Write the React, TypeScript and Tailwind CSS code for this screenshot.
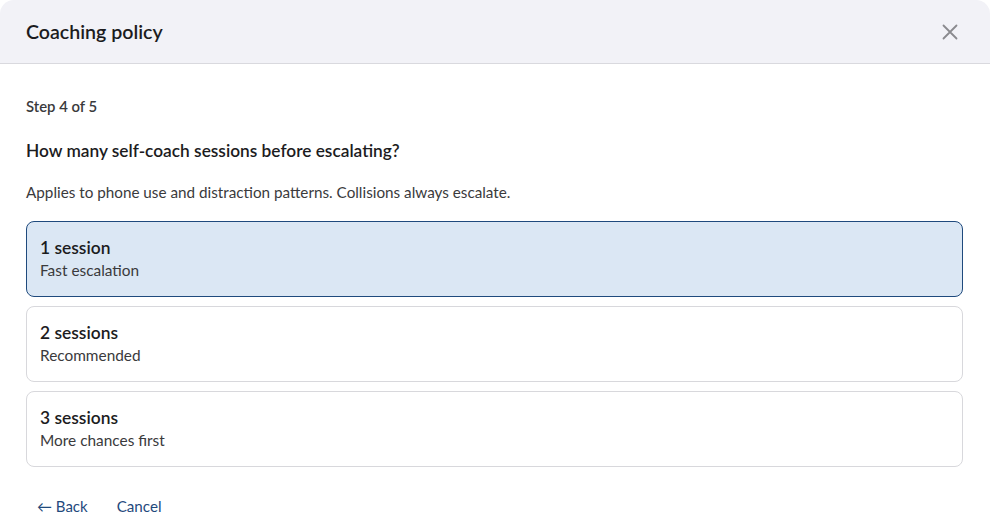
import React, { useState } from "react";

const options = [
  { title: "1 session", note: "Fast escalation" },
  { title: "2 sessions", note: "Recommended" },
  { title: "3 sessions", note: "More chances first" },
];

export default function App() {
  const [selected, setSelected] = useState(0);
  return (
    <div className="min-h-screen w-full bg-white" style={{ fontFamily: "Lato, 'Open Sans', sans-serif" }}>
      <div className="w-[990px] rounded-t-[14px] bg-white">
        <header className="flex h-[64px] items-center justify-between rounded-t-[14px] border-b border-[#d9d9de] bg-[#f2f2f7] pl-[26px] pr-[28px]">
          <h1 className="pt-[1px] text-[19.6px] font-semibold leading-[28px] text-[#1c1c1e]">Coaching policy</h1>
          <button className="flex h-[24px] w-[24px] items-center justify-center text-[#8a8a8e]" aria-label="Close">
            <svg width="16" height="16" viewBox="0 0 16 16" fill="none" stroke="currentColor" strokeWidth="1.8" strokeLinecap="round">
              <path d="M1.5 1.5L14.5 14.5M14.5 1.5L1.5 14.5" />
            </svg>
          </button>
        </header>

        <main className="px-[26px] pt-[32px]">
          <p className="text-[14.9px] font-semibold leading-[20px] text-[#3a3a3c]">Step 4 of 5</p>
          <h2 className="mt-[23px] text-[17.3px] font-semibold leading-[24px] text-[#1c1c1e]">
            How many self-coach sessions before escalating?
          </h2>
          <p className="mt-[19px] text-[15.25px] leading-[20px] text-[#3a3a3c]">
            Applies to phone use and distraction patterns. Collisions always escalate.
          </p>

          <div className="mt-[19px] flex w-[937px] flex-col gap-[9px]">
            {options.map((o, i) => (
              <button
                key={o.title}
                onClick={() => setSelected(i)}
                className={
                  i === selected
                    ? "flex h-[76px] flex-col items-start rounded-[8px] border border-[#1f4a7d] bg-[#dbe7f4] px-[13px] pt-[14px] text-left"
                    : "flex h-[76px] flex-col items-start rounded-[8px] border border-[#d8d8dc] bg-white px-[13px] pt-[14px] text-left"
                }
              >
                <span className="text-[17.4px] font-semibold leading-[24px] text-[#1c1c1e]">{o.title}</span>
                <span className="text-[15.4px] leading-[20px] text-[#3a3a3c]">{o.note}</span>
              </button>
            ))}
          </div>

          <div className="mt-[29px] flex items-center gap-[6px]">
            <button className="px-[11px] text-[15px] leading-[20px] text-[#1f4a7d]">← Back</button>
            <button className="px-[12px] text-[15.2px] leading-[20px] text-[#1f4a7d]">Cancel</button>
          </div>
        </main>
      </div>
    </div>
  );
}
